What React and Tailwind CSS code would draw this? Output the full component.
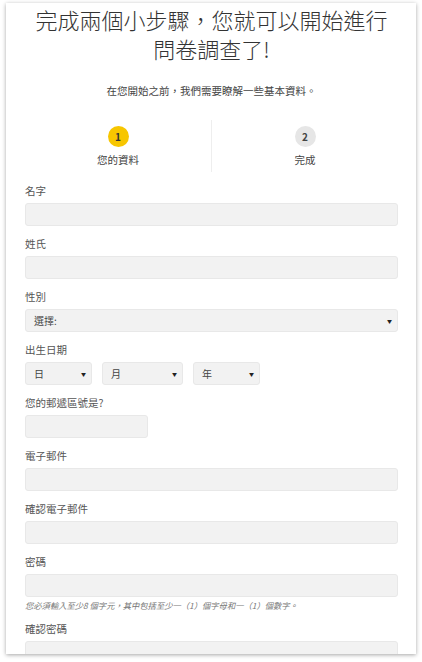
import React from "react";

const font = { fontFamily: '"Noto Sans CJK TC", "Noto Sans", sans-serif' };

const Field = ({ label, children, hint }) => (
  <div className="mb-[10px]">
    <label className="block h-[16px] leading-[16px] text-[10.5px] text-[#555] mb-[4px]">{label}</label>
    {children}
    {hint && (
      <p className="mt-[2px] h-[12px] leading-[12px] text-[8.3px] italic text-[#777] whitespace-nowrap">{hint}</p>
    )}
  </div>
);

const Input = ({ className = "w-full" }) => (
  <div className={`h-[23px] rounded-[3px] border border-[#e8e8e8] bg-[#f2f2f2] ${className}`} />
);

const Select = ({ text, className = "w-full" }) => (
  <div
    className={`h-[23px] rounded-[3px] border border-[#e8e8e8] bg-[#f2f2f2] flex items-center justify-between pl-[8px] pr-[5px] text-[10px] text-[#444] ${className}`}
  >
    <span>{text}</span>
    <span className="text-[5px] leading-none text-[#222]">▼</span>
  </div>
);

const App = () => {
  return (
    <div className="min-h-screen bg-white px-[6px] pt-[3px]" style={font}>
      <div className="h-[651px] overflow-hidden bg-white shadow-[0_1px_4px_rgba(0,0,0,0.35)] pl-[19px] pr-[18px] pt-[2px]">
        {/* Title */}
        <h1 className="text-center text-[22px] leading-[29px] font-light text-[#333]">
          完成兩個小步驟，您就可以開始進行
          <br />
          問卷調查了!
        </h1>
        <p className="mt-[21px] text-center text-[10.5px] leading-[14px] text-[#444]">
          在您開始之前，我們需要瞭解一些基本資料。
        </p>

        {/* Steps */}
        <div className="mt-[22px] flex">
          <div className="flex-1 flex flex-col items-center border-r border-[#eeeeee] pt-[6px] h-[52px]">
            <div className="w-[21px] h-[21px] rounded-full bg-[#f7c600] flex items-center justify-center text-[10px] font-bold text-[#333]">
              1
            </div>
            <span className="mt-[6px] text-[10.5px] leading-[14px] text-[#444]">您的資料</span>
          </div>
          <div className="flex-1 flex flex-col items-center pt-[6px] h-[52px]">
            <div className="w-[21px] h-[21px] rounded-full bg-[#e6e6e6] flex items-center justify-center text-[10px] font-bold text-[#444]">
              2
            </div>
            <span className="mt-[6px] text-[10.5px] leading-[14px] text-[#444]">完成</span>
          </div>
        </div>

        {/* Form */}
        <form className="mt-[11px]">
          <Field label="名字">
            <Input />
          </Field>
          <Field label="姓氏">
            <Input />
          </Field>
          <Field label="性別">
            <Select text="選擇:" />
          </Field>
          <Field label="出生日期">
            <div className="flex gap-[10px]">
              <Select text="日" className="w-[67px]" />
              <Select text="月" className="w-[81px]" />
              <Select text="年" className="w-[67px]" />
            </div>
          </Field>
          <Field label="您的郵遞區號是?">
            <Input className="w-[123px]" />
          </Field>
          <Field label="電子郵件">
            <Input />
          </Field>
          <Field label="確認電子郵件">
            <Input />
          </Field>
          <Field
            label="密碼"
            hint="您必須輸入至少8 個字元，其中包括至少一（1）個字母和一（1）個數字。"
          >
            <Input />
          </Field>
          <Field label="確認密碼">
            <Input />
          </Field>
        </form>
      </div>
    </div>
  );
};

export default App;
